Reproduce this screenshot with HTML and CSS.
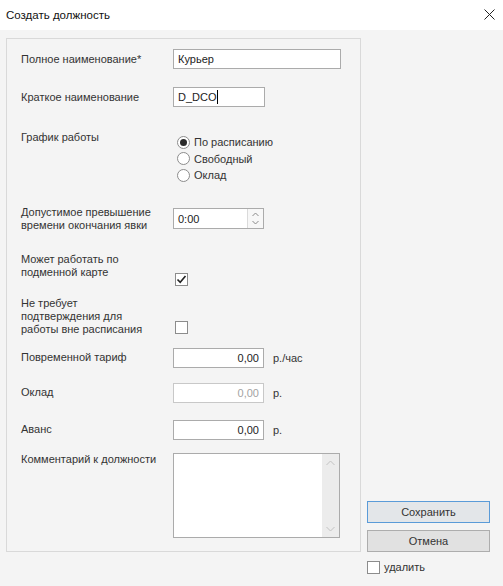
FILE: index.html
```html
<!DOCTYPE html>
<html lang="ru">
<head>
    <meta charset="UTF-8">
    <title>Создать должность</title>
    <link rel="stylesheet" href="styles.css">
</head>
<body>

    <div class="titlebar">
        <span class="title">Создать должность</span>
        <svg class="close" width="11" height="11" viewBox="0 0 11 11">
            <path d="M0.5 0.5 L10.5 10.5 M10.5 0.5 L0.5 10.5" stroke="#222" stroke-width="1" fill="none"/>
        </svg>
    </div>

    <div class="window">
        <div class="group">
            <div class="row row-name">
                <label>Полное наименование*</label>
                <div class="field"><span class="input input-wide">Курьер</span></div>
            </div>

            <div class="row row-short">
                <label>Краткое наименование</label>
                <div class="field"><span class="input input-short">D_DCO<span class="caret"></span></span></div>
            </div>

            <div class="row row-schedule">
                <label>График работы</label>
                <div class="radios">
                    <div class="radio-line"><span class="radio checked"></span>По расписанию</div>
                    <div class="radio-line"><span class="radio"></span>Свободный</div>
                    <div class="radio-line"><span class="radio"></span>Оклад</div>
                </div>
            </div>

            <div class="row row-time">
                <label>Допустимое превышение<br>времени окончания явки</label>
                <div class="field">
                    <span class="input input-time">0:00
                        <span class="spinner">
                            <svg width="7" height="5" viewBox="0 0 7 5"><path d="M0.5 4 L3.5 1 L6.5 4" stroke="#8a8a8a" fill="none"/></svg>
                            <svg width="7" height="5" viewBox="0 0 7 5"><path d="M0.5 1 L3.5 4 L6.5 1" stroke="#8a8a8a" fill="none"/></svg>
                        </span>
                    </span>
                </div>
            </div>

            <div class="row row-check1">
                <label>Может работать по<br>подменной карте</label>
                <div class="check-cell">
                    <span class="checkbox">
                        <svg width="11" height="11" viewBox="0 0 11 11"><path d="M1.5 5.5 L4.2 8.3 L9.5 2" stroke="#222" stroke-width="1.6" fill="none"/></svg>
                    </span>
                </div>
            </div>

            <div class="row row-check2">
                <label>Не требует<br>подтверждения для<br>работы вне расписания</label>
                <div class="check-cell"><span class="checkbox"></span></div>
            </div>

            <div class="row row-rate">
                <label>Повременной тариф</label>
                <div class="field"><span class="input input-num">0,00</span><span class="unit">р./час</span></div>
            </div>

            <div class="row row-salary">
                <label>Оклад</label>
                <div class="field"><span class="input input-num disabled">0,00</span><span class="unit">р.</span></div>
            </div>

            <div class="row row-advance">
                <label>Аванс</label>
                <div class="field"><span class="input input-num">0,00</span><span class="unit">р.</span></div>
            </div>

            <div class="row row-comment">
                <label>Комментарий к должности</label>
                <div class="memo">
                    <span class="scrollbar">
                        <svg width="9" height="6" viewBox="0 0 9 6"><path d="M0.5 5 L4.5 1 L8.5 5" stroke="#c2c2c2" fill="none"/></svg>
                        <svg width="9" height="6" viewBox="0 0 9 6"><path d="M0.5 1 L4.5 5 L8.5 1" stroke="#c2c2c2" fill="none"/></svg>
                    </span>
                </div>
            </div>
        </div>

        <div class="side">
            <button class="btn btn-default">Сохранить</button>
            <button class="btn">Отмена</button>
        </div>

        <div class="delete">
            <span class="checkbox"></span>удалить
        </div>
    </div>

</body>
</html>
```

FILE: styles.css
```css
/* Окно "Создать должность" */
body {
    font-family: "Liberation Sans", Arial, sans-serif;
    font-size: 11px;
    color: #333;
    background-color: #f4f4f4;
    margin: 0;
}
.titlebar {
    height: 30px;
    background-color: #fff;
    display: flex;
    align-items: center;
    justify-content: space-between;
    padding: 0 8px 0 6px;
    color: #111;
    font-size: 11.5px;
}
.close {
    margin-bottom: 2px;
}
/* Основная область */
.window {
    display: grid;
    grid-template-columns: 355px 123px;
    column-gap: 6px;
    padding: 8px 0 0 6px;
}
.group {
    border: 1px solid #d9d9d9;
    padding: 10px 14px 13px;
}
.side {
    display: flex;
    flex-direction: column;
    justify-content: flex-end;
    gap: 7px;
}
.delete {
    grid-column: 2;
    display: flex;
    align-items: center;
    gap: 4px;
    margin-top: 9px;
}
/* Строки формы */
.row {
    display: grid;
    grid-template-columns: 152px auto;
    align-items: center;
}
.row label {
    line-height: 13px;
}
.row-short { margin-top: 18px; }
.row-schedule { margin-top: 24px; align-items: start; }
.row-time { margin-top: 22px; }
.row-check1 { margin-top: 21px; align-items: start; }
.row-check2 { margin-top: 11px; align-items: start; }
.row-rate { margin-top: 12px; }
.row-salary { margin-top: 15px; }
.row-advance { margin-top: 17px; }
.row-comment { margin-top: 13px; align-items: start; }

.field {
    display: flex;
    align-items: center;
}
.input {
    display: flex;
    align-items: center;
    box-sizing: border-box;
    height: 20px;
    padding: 0 4px;
    background-color: #fff;
    border: 1px solid #ababab;
    color: #222;
}
.input-wide { width: 168px; }
.input-short { width: 92px; }
.input-num {
    width: 91px;
    justify-content: flex-end;
}
.input-num.disabled {
    border-color: #c8c8c8;
    color: #a3a3a3;
}
.input-time {
    width: 91px;
    height: 21px;
    position: relative;
}
.caret {
    display: inline-block;
    width: 1px;
    height: 14px;
    background-color: #000;
}
.spinner {
    position: absolute;
    right: 0;
    top: 0;
    bottom: 0;
    width: 15px;
    border-left: 1px solid #dadada;
    background-color: #f7f7f7;
    display: flex;
    flex-direction: column;
    align-items: center;
    justify-content: center;
    gap: 3px;
}
.unit {
    margin-left: 9px;
}
/* Переключатели */
.radios {
    padding-top: 3px;
}
.radio-line {
    display: flex;
    align-items: center;
    height: 16.5px;
    margin-left: 4px;
}
.radio {
    box-sizing: border-box;
    width: 13px;
    height: 13px;
    border: 1px solid #8c8c8c;
    border-radius: 50%;
    background-color: #fff;
    margin-right: 4px;
    display: flex;
    align-items: center;
    justify-content: center;
}
.radio.checked::after {
    content: "";
    width: 7px;
    height: 7px;
    border-radius: 50%;
    background-color: #2b2b2b;
}
/* Флажки */
.check-cell {
    padding-left: 2px;
}
.row-check1 .check-cell { padding-top: 20px; }
.row-check2 .check-cell { padding-top: 24px; }
.checkbox {
    box-sizing: border-box;
    width: 13px;
    height: 13px;
    border: 1px solid #8c8c8c;
    background-color: #fff;
    display: flex;
    align-items: center;
    justify-content: center;
}
/* Комментарий */
.memo {
    box-sizing: border-box;
    width: 167px;
    height: 85px;
    border: 1px solid #ababab;
    background-color: #fff;
    display: flex;
    justify-content: flex-end;
}
.scrollbar {
    width: 17px;
    background-color: #ececec;
    display: flex;
    flex-direction: column;
    justify-content: space-between;
    align-items: center;
    padding: 6px 0 5px;
}
/* Кнопки */
.btn {
    font-family: inherit;
    font-size: 11px;
    color: #333;
    height: 22px;
    padding: 0;
    background-color: #e1e1e1;
    border: 1px solid #adadad;
}
.btn-default {
    border-color: #5a9bd8;
    background-color: #e3e6e9;
}
```
